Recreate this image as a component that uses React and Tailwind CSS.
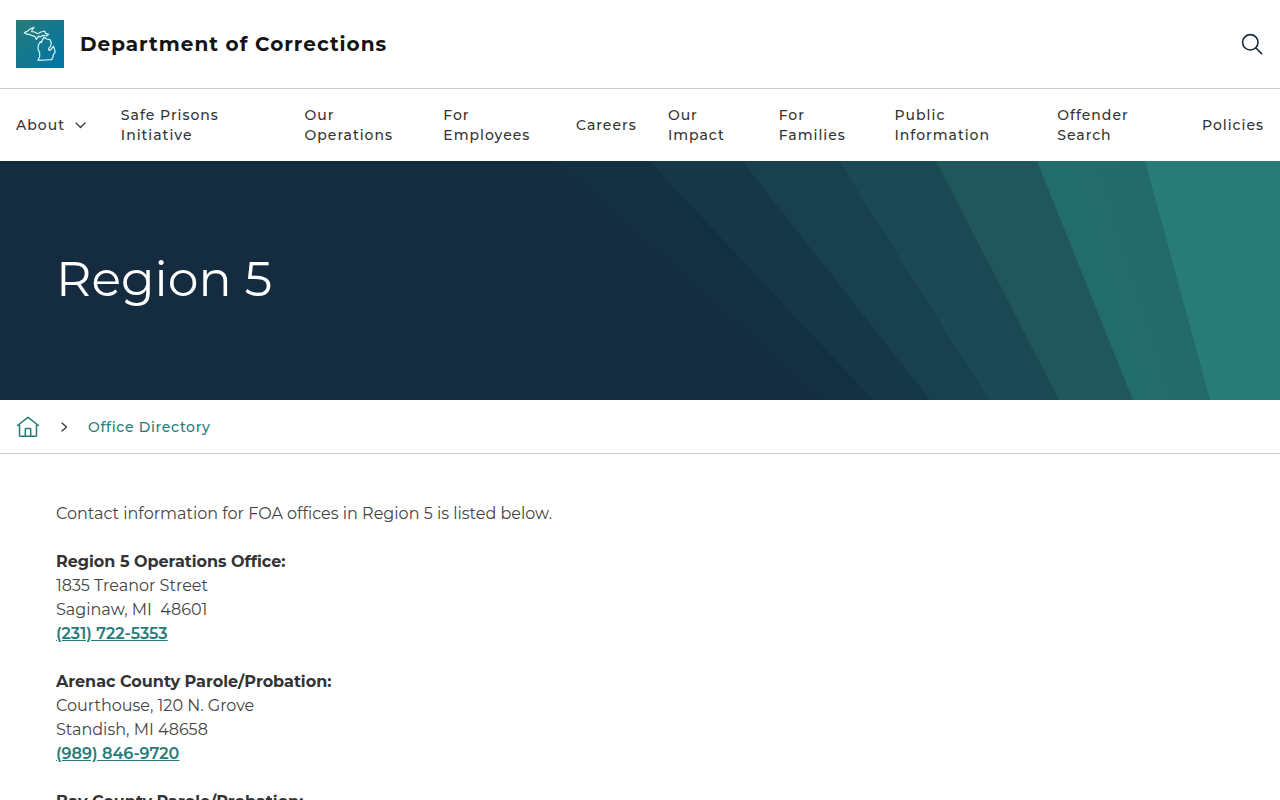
const navItems = [
  { lines: ["About"], menu: true },
  { lines: ["Safe Prisons", "Initiative"] },
  { lines: ["Our", "Operations"] },
  { lines: ["For", "Employees"] },
  { lines: ["Careers"] },
  { lines: ["Our", "Impact"] },
  { lines: ["For", "Families"] },
  { lines: ["Public", "Information"] },
  { lines: ["Offender", "Search"] },
  { lines: ["Policies"] },
];

const offices = [
  {
    name: "Region 5 Operations Office:",
    address: ["1835 Treanor Street", "Saginaw, MI\u00a0 48601"],
    phone: "(231) 722-5353",
  },
  {
    name: "Arenac County Parole/Probation:",
    address: ["Courthouse, 120 N. Grove", "Standish, MI 48658"],
    phone: "(989) 846-9720",
  },
  { name: "Bay County Parole/Probation:", address: [] },
];

function Logo() {
  return (
    <svg viewBox="0 0 144 144" className="size-12" aria-hidden="true">
      <defs>
        <linearGradient id="logo-fill" x1="0" y1="0" x2="1" y2="1">
          <stop offset="0" stopColor="#277c78" />
          <stop offset="1" stopColor="#0073a8" />
        </linearGradient>
      </defs>
      <rect width="144" height="144" fill="url(#logo-fill)" />
      <g fill="none" stroke="#d8f6f8" strokeWidth="3.6" strokeLinejoin="round">
        <path d="M25 38L34 34L42 27L54 22L48 30L47 35L56 36L65 41L75 36L86 33L88 40L98 43L91 48L80 46L75 50L67 49L61 58L56 49L48 47L40 43L33 43Z" />
        <path d="M84 52L92 57L102 59L106 69L103 80L98 85L99 91L105 89L112 79L116 88L117 98L112 104L111 111L107 119L88 120L66 121L71 110L71 99L66 87L67 76L73 65L76 68L79 60Z" />
      </g>
    </svg>
  );
}

function HeroRays() {
  return (
    <svg
      viewBox="0 0 1280 239"
      preserveAspectRatio="none"
      className="absolute inset-0 size-full"
      aria-hidden="true"
    >
      <defs>
        <linearGradient id="ray-teal" x1="0" y1="0.6" x2="1" y2="0.3">
          <stop offset="0.2" stopColor="#226d6b" />
          <stop offset="1" stopColor="#246866" />
        </linearGradient>
      </defs>
      <path d="M554 0H1280V239H820Z" fill="#142f41" />
      <path d="M649 0H1280V239H873Z" fill="#163748" />
      <path d="M742 0H1280V239H930Z" fill="#19404e" />
      <path d="M839 0H1280V239H989Z" fill="#1a4853" />
      <path d="M936 0H1280V239H1059Z" fill="#1f575b" />
      <path d="M1037 0H1280V239H1133Z" fill="url(#ray-teal)" />
      <path d="M1145 0H1280V239H1210Z" fill="#277c76" />
    </svg>
  );
}

export default function App() {
  return (
    <div className="min-h-screen bg-white font-['Montserrat','Inter',sans-serif] text-[#333333]">
      <header>
        <div className="flex items-center justify-between border-b border-[#cccccc] px-4 py-5">
          <a href="#" className="flex items-center gap-4">
            <Logo />
            <span className="text-xl font-bold tracking-[1px] text-[#141414]">
              Department of Corrections
            </span>
          </a>
          <button type="button" aria-label="Search" className="text-[#142c3f]">
            <svg viewBox="0 0 24 24" className="size-6" fill="none" stroke="currentColor" strokeWidth="1.6" strokeLinecap="round">
              <circle cx="10.3" cy="10.3" r="7.7" />
              <path d="M16 16L21.6 21.6" />
            </svg>
          </button>
        </div>
        <nav className="grid grid-cols-[105fr_184fr_139fr_133fr_92fr_111fr_116fr_163fr_145fr_60fr] items-center px-4 py-4 text-sm leading-5 font-medium tracking-[1px]">
          {navItems.map(({ lines, menu }) =>
            menu ? (
              <button key={lines[0]} type="button" className="flex items-center gap-2 text-left tracking-[1px]">
                {lines[0]}
                <svg viewBox="0 0 16 16" className="size-4" fill="none" stroke="currentColor" strokeWidth="1.2" strokeLinecap="round" strokeLinejoin="round">
                  <path d="M3 6L7.5 10.5L12 6" />
                </svg>
              </button>
            ) : (
              <a key={lines.join(" ")} href="#" className="whitespace-nowrap">
                {lines.map((line) => (
                  <span key={line} className="block">{line}</span>
                ))}
              </a>
            )
          )}
        </nav>
      </header>

      <section className="relative flex min-h-[239px] items-center bg-[#152b3f] px-14 pb-1">
        <HeroRays />
        <h1 className="relative text-[49px] leading-none text-white">Region 5</h1>
      </section>

      <nav aria-label="Breadcrumb" className="flex min-h-[54px] items-center gap-4 border-b border-[#cccccc] px-4">
        <a href="#" aria-label="Home" className="text-[#277c78]">
          <svg viewBox="0 0 24 24" className="size-6" fill="none" stroke="currentColor" strokeWidth="1.5" strokeLinecap="round" strokeLinejoin="round">
            <path d="M1.5 10.5L12 2.3L22.5 10.5M3.5 9V20.6Q3.5 21.2 4.1 21.2H19.9Q20.5 21.2 20.5 20.6V9M9.3 21V14.2Q9.3 13.5 10 13.5H14Q14.7 13.5 14.7 14.2V21" />
          </svg>
        </a>
        <svg viewBox="0 0 16 16" className="size-4" fill="none" stroke="currentColor" strokeWidth="1.2" strokeLinecap="round" strokeLinejoin="round">
          <path d="M6 4L10.5 8L6 12" />
        </svg>
        <a href="#" className="text-sm font-medium tracking-wider text-[#277c78]">Office Directory</a>
      </nav>

      <main className="flex flex-col gap-6 px-14 pt-12 text-base leading-6">
        <p className="text-[#444444]">Contact information for FOA offices in Region 5 is listed below.</p>
        {offices.map(({ name, address, phone }) => (
          <section key={name}>
            <h2 className="font-bold">{name}</h2>
            {address.map((line) => (
              <p key={line} className="text-[#444444]">{line}</p>
            ))}
            {phone && (
              <a href={`tel:${phone.replace(/\D/g, "")}`} className="font-semibold text-[#277c78] underline">{phone}</a>
            )}
          </section>
        ))}
      </main>
    </div>
  );
}
